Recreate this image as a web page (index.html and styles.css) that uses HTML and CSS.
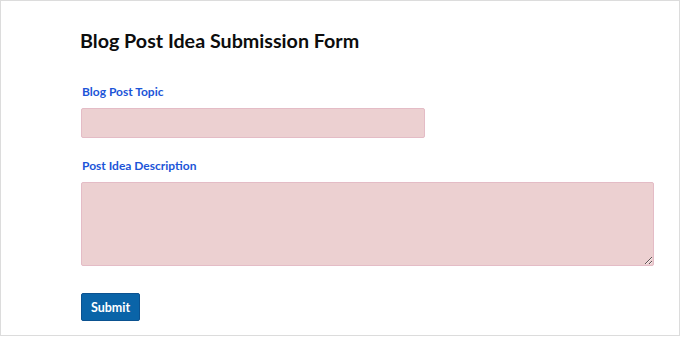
FILE: index.html
```html
<!DOCTYPE html>
<html>
<head>
<meta charset="utf-8">
<link rel="stylesheet" href="styles.css">
</head>
<body>
<div class="frame">
  <form class="form">
    <h1 class="title">Blog Post Idea Submission Form</h1>
    <div class="field">
      <label class="label" for="topic">Blog Post Topic</label>
      <input class="input" id="topic" type="text">
    </div>
    <div class="field">
      <label class="label" for="desc">Post Idea Description</label>
      <textarea class="textarea" id="desc"></textarea>
    </div>
    <button class="submit" type="button">Submit</button>
  </form>
</div>
</body>
</html>
```
FILE: styles.css
```css
html, body {
  margin: 0;
  padding: 0;
  background: #ffffff;
}
.frame {
  box-sizing: border-box;
  width: 680px;
  height: 336px;
  border: 1px solid #dcdcdc;
  padding: 28px 0 0 80px;
  font-family: Lato, "Noto Sans", sans-serif;
}
.form {
  display: flex;
  flex-direction: column;
  align-items: flex-start;
}
.title {
  margin: 0 0 0 -1px;
  font-size: 19.7px;
  line-height: 24px;
  font-weight: 700;
  color: #0d0d0d;
}
.field {
  display: flex;
  flex-direction: column;
  margin-top: 31px;
}
.field + .field {
  margin-top: 20px;
}
.label {
  font-size: 12px;
  line-height: 16px;
  font-weight: 700;
  color: #1c55d8;
  margin: 0 0 8px 1px;
}
.input {
  box-sizing: border-box;
  width: 344px;
  height: 30px;
  margin: 0;
  background: #ecd0d1;
  border: 1px solid #e4bcc6;
  border-radius: 2px;
  outline: none;
}
.textarea {
  box-sizing: border-box;
  width: 573px;
  height: 84px;
  margin: 0;
  background: #ecd0d1;
  border: 1px solid #e4bcc6;
  border-radius: 2px;
  resize: both;
  outline: none;
}
.submit {
  margin-top: 27px;
  box-sizing: border-box;
  width: 59px;
  height: 28px;
  padding: 0;
  background: #0a64a8;
  border: 1px solid #0b5290;
  border-radius: 2px;
  color: #ffffff;
  font-family: Lato, "Noto Sans", sans-serif;
  font-size: 12.5px;
  font-weight: 700;
}
```
